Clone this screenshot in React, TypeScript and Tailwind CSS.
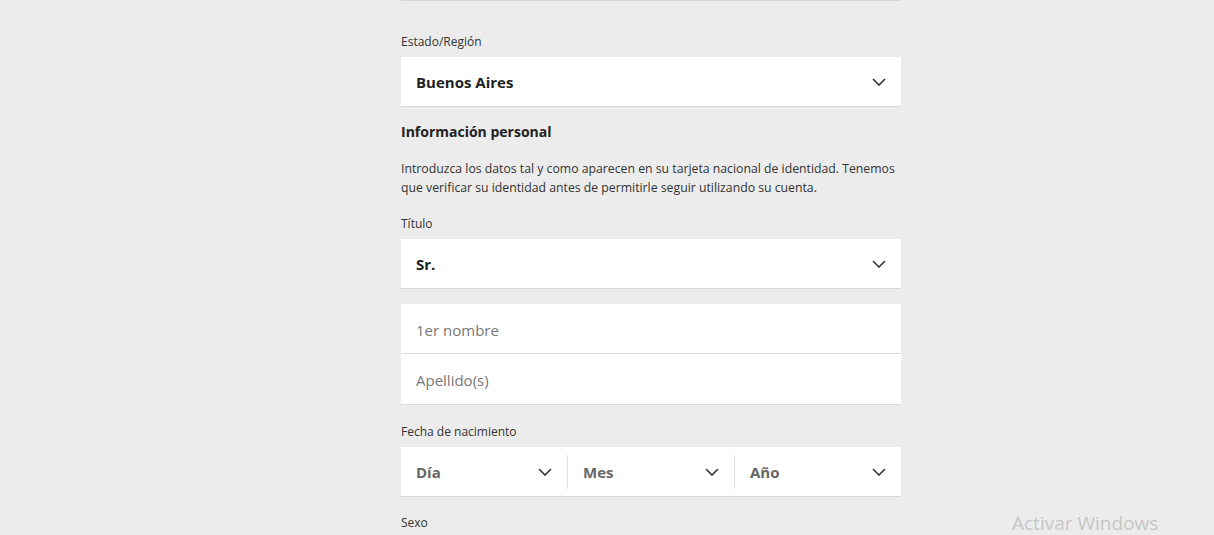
import { ReactNode } from 'react';

function Chevron() {
  return (
    <svg width="14" height="8" viewBox="0 0 14 8" fill="none" className="shrink-0">
      <polyline points="1,1 7,7 13,1" stroke="#333" strokeWidth="1.6" fill="none" />
    </svg>
  );
}

function Label({ children }: { children: ReactNode }) {
  return <div className="text-[12px] leading-4 text-[#333]">{children}</div>;
}

function Select({ value }: { value: string }) {
  return (
    <div className="flex h-[50px] items-center justify-between bg-white px-[15px] border-b border-[#d9d9d9]">
      <span className="mt-px text-[15px] font-bold text-[#222]">{value}</span>
      <Chevron />
    </div>
  );
}

export default function App() {
  const dateParts = ['Día', 'Mes', 'Año'];

  return (
    <div
      className="relative min-h-[535px] overflow-hidden bg-[#ebeceb]"
      style={{ fontFamily: '"Open Sans", "Noto Sans", sans-serif' }}
    >
      <div className="ml-[401px] w-[500px]">
        <div className="h-px bg-white border-b border-[#d6d6d6]" />

        <div className="mt-[33px]">
          <Label>Estado/Región</Label>
        </div>
        <div className="mt-[7px]">
          <Select value="Buenos Aires" />
        </div>

        <h2 className="mt-[15px] text-[14px] font-bold leading-5 text-[#222]">Información personal</h2>

        <p className="mt-[17px] text-[12.25px] leading-[19px] text-[#333]">
          Introduzca los datos tal y como aparecen en su tarjeta nacional de identidad. Tenemos que
          verificar su identidad antes de permitirle seguir utilizando su cuenta.
        </p>

        <div className="mt-[19px]">
          <Label>Título</Label>
        </div>
        <div className="mt-[7px]">
          <Select value="Sr." />
        </div>

        <div className="mt-[15px] bg-white border-b border-[#d9d9d9]">
          <div className="flex h-[50px] items-center px-[15px] pt-[3px] text-[15px] text-[#777] border-b border-[#dcdcdc]">
            1er nombre
          </div>
          <div className="flex h-[50px] items-center px-[15px] pt-[3px] text-[15px] text-[#777]">Apellido(s)</div>
        </div>

        <div className="mt-[19px]">
          <Label>Fecha de nacimiento</Label>
        </div>
        <div className="mt-[7px] flex h-[50px] items-center bg-white border-b border-[#d9d9d9]">
          {dateParts.map((p, i) => (
            <div
              key={p}
              className={`flex h-[34px] flex-1 items-center justify-between px-[15px] ${
                i > 0 ? 'border-l border-[#e2e2e2]' : ''
              }`}
            >
              <span className="mt-px text-[15px] font-bold text-[#666]">{p}</span>
              <Chevron />
            </div>
          ))}
        </div>

        <div className="mt-[18px]">
          <Label>Sexo</Label>
        </div>
      </div>

      <div className="absolute left-[1012px] top-[514px] text-[19px] leading-none text-[#c6c6c6]">
        Activar Windows
      </div>
    </div>
  );
}
